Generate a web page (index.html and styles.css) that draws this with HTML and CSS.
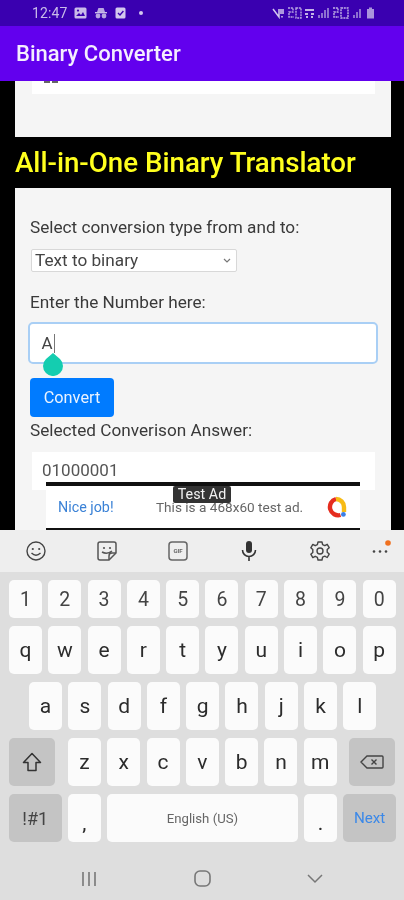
FILE: index.html
```html
<!DOCTYPE html>
<html lang="en">
<head>
<meta charset="utf-8">
<title>Binary Converter</title>
<link rel="stylesheet" href="styles.css">
</head>
<body>
<div class="phone">
  <header class="status">
    <span class="time">12:47</span>
    <svg class="st-ico" width="13" height="12" viewBox="0 0 13 12"><rect x="0.5" y="0.5" width="12" height="11" rx="1.5" fill="#c9bbe9"/><path d="M2 9l3-3 2 2 2-3 2 4z" fill="#3a00b0"/><circle cx="4" cy="3.6" r="1.1" fill="#3a00b0"/></svg>
    <svg class="st-ico" width="14" height="12" viewBox="0 0 14 12"><path d="M3 5l1.4-4h5.2L11 5z" fill="#b9a6e2"/><rect x="1" y="5" width="12" height="1.4" fill="#c9bbe9"/><circle cx="4" cy="9" r="2.4" fill="#b9a6e2"/><circle cx="10" cy="9" r="2.4" fill="#b9a6e2"/></svg>
    <svg class="st-ico" width="11" height="12" viewBox="0 0 11 12"><rect x="0.5" y="0.5" width="10" height="11" rx="1.5" fill="#d3c8ee"/><path d="M3 6l2 2 3.4-4" fill="none" stroke="#3a00b0" stroke-width="1.4"/></svg>
    <span class="dot"></span>
    <span class="st-right">
      <svg width="12" height="12" viewBox="0 0 12 12"><path d="M1 2l6 8V2M9 2v5M11 2v5M10 9v1.5" fill="none" stroke="#d3c8ee" stroke-width="1.5"/></svg>
      <svg width="15" height="12" viewBox="0 0 15 12"><path d="M1 1h5v4H2v5h5M9 1h5v10H9z" fill="none" stroke="#b9a6e2" stroke-width="1.4" stroke-dasharray="2 .8"/></svg>
      <svg width="11" height="12" viewBox="0 0 11 12"><path d="M1 2h9v2H1zM1 6h3v2H1zM7 6h3v2H7zM2 9h2v2H2zM7 9h2v2H7z" fill="#c3b3e6"/></svg>
      <svg width="12" height="12" viewBox="0 0 12 12"><path d="M1 11V8M4 11V6M7 11V3M10 11V1" stroke="#a995dc" stroke-width="1.5"/></svg>
      <svg width="18" height="12" viewBox="0 0 18 12"><path d="M1 1h5v4H2v5h5M9 1h7v10H9z" fill="none" stroke="#c3b3e6" stroke-width="1.4" stroke-dasharray="2 .8"/></svg>
      <svg width="8" height="12" viewBox="0 0 8 12"><path d="M1 11V8M4 11V5M7 11V2" stroke="#a995dc" stroke-width="1.5"/></svg>
      <svg class="batt" width="9" height="12" viewBox="0 0 9 12"><path d="M3 .5h3v1.5h2v9.500H1V2h2z" fill="#a995dc"/></svg>
    </span>
  </header>
  <div class="appbar">Binary Converter</div>

  <main class="content">
    <section class="card card-top"><div class="box box-top"><span class="stub"></span></div></section>
    <h1 class="headline">All-in-One Binary Translator</h1>
    <section class="card card-form">
      <p class="label label-first">Select conversion type from and to:</p>
      <div class="select">Text to binary
        <svg class="chev" width="8" height="5" viewBox="0 0 8 5"><path d="M1 1l3 3 3-3" fill="none" stroke="#777" stroke-width="1.2"/></svg>
      </div>
      <p class="label label-num">Enter the Number here:</p>
      <div class="input">A<span class="caret"></span></div>
      <div class="btn">Convert</div>
      <p class="label label-ans">Selected Converison Answer:</p>
      <div class="box box-ans">01000001</div>
    </section>
    <svg class="handle" width="20" height="23" viewBox="0 0 20 23"><path d="M10 0l7 5.900a10 10 0 1 1-14 0z" fill="#14cdb0"/></svg>
    <aside class="ad">
      <span class="ad-tag">Test Ad</span>
      <span class="ad-nice">Nice job!</span>
      <span class="ad-text">This is a 468x60 test ad.</span>
      <svg class="ad-logo" width="22" height="22" viewBox="0 0 22 22"><path d="M15.500 19A8 8 0 1 1 11 3" fill="none" stroke="#e52d1f" stroke-width="4.400"/><path d="M11 3a8 8 0 0 1 8 8v5" fill="none" stroke="#f7bb15" stroke-width="4.400"/><circle cx="18.400" cy="18.400" r="2.400" fill="#3a7fe6"/></svg>
    </aside>
  </main>

  <section class="keyboard">
    <div class="tools">
      <svg width="22" height="22" viewBox="0 0 22 22"><circle cx="11" cy="11" r="9" fill="none" stroke="#444" stroke-width="1.400"/><circle cx="7.800" cy="9" r="1.100" fill="#444"/><circle cx="14.200" cy="9" r="1.100" fill="#444"/><path d="M6.500 13q4.500 4.500 9 0" fill="none" stroke="#444" stroke-width="1.400"/></svg>
      <svg width="22" height="22" viewBox="0 0 22 22"><path d="M4 2h14a2 2 0 0 1 2 2v9l-7 7H4a2 2 0 0 1-2-2V4a2 2 0 0 1 2-2z" fill="none" stroke="#555" stroke-width="1.500"/><circle cx="8" cy="8" r="1.100" fill="#555"/><circle cx="14" cy="8" r="1.100" fill="#555"/><path d="M6 12q5 3 10-1M13 20v-4a3 3 0 0 1 3-3h4" fill="none" stroke="#555" stroke-width="1.500"/></svg>
      <svg width="22" height="22" viewBox="0 0 22 22"><rect x="2" y="2" width="18" height="18" rx="3" fill="none" stroke="#666" stroke-width="1.500"/><text x="11" y="13.200" text-anchor="middle" class="gif-text">GIF</text></svg>
      <svg width="22" height="22" viewBox="0 0 22 22"><rect x="8" y="1" width="6" height="12" rx="3" fill="#333"/><path d="M4.500 10a6.500 6.500 0 0 0 13 0M11 16.500V21" fill="none" stroke="#333" stroke-width="1.600"/></svg>
      <svg width="22" height="22" viewBox="0 0 22 22"><path d="M9 2h4l.6 2.600 2.200 1 2.400-1.300 2 3.400-2 1.800v2.800l2 1.800-2 3.400-2.400-1.300-2.200 1L13 20H9l-.6-2.700-2.200-1-2.400 1.300-2-3.400 2-1.800V9.600l-2-1.800 2-3.400 2.400 1.300 2.200-1z" fill="none" stroke="#444" stroke-width="1.400" stroke-linejoin="round"/><circle cx="11" cy="11" r="3" fill="none" stroke="#444" stroke-width="1.400"/></svg>
      <svg class="more" width="22" height="22" viewBox="0 0 22 22"><circle cx="5" cy="11.500" r="1.300" fill="#444"/><circle cx="11" cy="11.500" r="1.300" fill="#444"/><circle cx="17" cy="11.500" r="1.300" fill="#444"/><circle cx="19" cy="3" r="2.800" fill="#f0701e"/></svg>
    </div>
    <div class="keys">
      <div class="row row-num"><span class="key num">1</span><span class="key num">2</span><span class="key num">3</span><span class="key num">4</span><span class="key num">5</span><span class="key num">6</span><span class="key num">7</span><span class="key num">8</span><span class="key num">9</span><span class="key num">0</span></div>
      <div class="row"><span class="key">q</span><span class="key">w</span><span class="key">e</span><span class="key">r</span><span class="key">t</span><span class="key">y</span><span class="key">u</span><span class="key">i</span><span class="key">o</span><span class="key">p</span></div>
      <div class="row row-a"><span class="key">a</span><span class="key">s</span><span class="key">d</span><span class="key">f</span><span class="key">g</span><span class="key">h</span><span class="key">j</span><span class="key">k</span><span class="key">l</span></div>
      <div class="row row-z">
        <span class="key mod shift"><svg width="20" height="20" viewBox="0 0 20 20"><path d="M10 1.500L1.500 10.500H6V18.500H14V10.500H18.500Z" fill="none" stroke="#333" stroke-width="1.500" stroke-linejoin="round"/></svg></span>
        <span class="key">z</span><span class="key">x</span><span class="key">c</span><span class="key">v</span><span class="key">b</span><span class="key">n</span><span class="key">m</span>
        <span class="key mod del"><svg width="24" height="14" viewBox="0 0 24 14"><path d="M7 1h15a1 1 0 0 1 1 1v10a1 1 0 0 1-1 1H7L1 7z" fill="none" stroke="#444" stroke-width="1.400"/><path d="M11.500 4.500l5 5m0-5l-5 5" stroke="#444" stroke-width="1.400"/></svg></span>
      </div>
      <div class="row row-b">
        <span class="key mod sym">!#1</span>
        <span class="key punct">,</span>
        <span class="key space">English (US)</span>
        <span class="key punct">.</span>
        <span class="key mod next">Next</span>
      </div>
    </div>
    <nav class="navbar">
      <svg width="16" height="16" viewBox="0 0 16 16"><path d="M2 1v14M8 1v14M14 1v14" stroke="#777" stroke-width="1.600"/></svg>
      <svg width="17" height="17" viewBox="0 0 17 17"><rect x="1" y="1" width="15" height="15" rx="5" fill="none" stroke="#777" stroke-width="1.600"/></svg>
      <svg width="16" height="10" viewBox="0 0 16 10"><path d="M1 1l7 7 7-7" fill="none" stroke="#777" stroke-width="1.500"/></svg>
    </nav>
  </section>
</div>
</body>
</html>
```
FILE: styles.css
```css
* { box-sizing: border-box; }
html, body { margin: 0; padding: 0; }
body { background: #000; font-family: Roboto, "Noto Sans", sans-serif; }
.phone { width: 404px; height: 900px; display: flex; flex-direction: column; overflow: hidden; filter: blur(0.5px); }

.status { height: 26px; flex: none; background: #3a00b0; display: flex; align-items: center; padding: 0 29px 0 32px; color: #c9bbe9; }
.time { font-size: 14px; width: 42px; letter-spacing: 0.1px; }
.st-ico { margin-right: 7px; flex: none; }
.dot { width: 4px; height: 4px; border-radius: 50%; background: #d3c8ee; margin-left: 6px; }
.st-right { margin-left: auto; display: flex; align-items: center; gap: 2.500px; }
.batt { margin-left: 3px; }

.appbar { height: 55px; flex: none; background: #6200ee; color: #f4eefe; font-size: 22px; font-weight: 500; line-height: 56px; padding-left: 16px; }

.content { position: relative; flex: 1; min-height: 0; overflow: hidden; background: #000; padding: 0 13px 0 15px; }
.card { background: #f5f5f5; }
.card-top { height: 56px; padding: 0 16px 0 17px; }
.box { background: #fff; }
.box-top { height: 13px; }
.stub { display: block; width: 14px; height: 2px; margin-left: 12px; background: repeating-linear-gradient(90deg, #666 0 6px, transparent 6px 8px); }
.headline { margin: 0; height: 51px; line-height: 52px; font-size: 27.700px; font-weight: 500; color: #ffff1e; white-space: nowrap; }
.card-form { height: 342px; padding: 0 16px 0 15px; }
.label { margin: 0; font-size: 17.200px; line-height: 20px; color: #3a3a3a; white-space: nowrap; }
.label-first { padding-top: 29px; height: 61px; }
.select { width: 206px; height: 23px; margin-left: 1px; background: #fff; border: 1px solid #d8d8d8; border-radius: 2px; font-size: 17.200px; line-height: 19px; padding: 0 5px 1px 3px; color: #444; display: flex; align-items: center; justify-content: space-between; }
.label-num { margin-top: 20px; height: 30px; }
.input { width: 350px; height: 42px; margin-left: -2px; background: #fff; border: 2.500px solid #a9cff5; border-radius: 5px; font-size: 17px; padding-left: 11.500px; color: #444; display: flex; align-items: center; }
.caret { width: 1px; height: 19px; background: #777; margin-left: 1px; }
.btn { width: 84px; height: 39px; margin-top: 14px; background: #007bff; border-radius: 4px; color: #eaf3ff; font-size: 16.300px; line-height: 39px; text-align: center; }
.label-ans { margin-top: 3px; height: 32px; }
.box-ans { width: 343px; height: 38px; margin-left: 2px; font-size: 17px; line-height: 36px; padding-left: 10px; color: #555; }

.handle { position: absolute; left: 43px; top: 272px; }

.ad { position: absolute; left: 46px; top: 401px; width: 314px; height: 49px; background: #fff; border-top: 4px solid #111; border-bottom: 3px solid #111; display: flex; align-items: center; padding: 0 12px; }
.ad-tag { position: absolute; left: 127px; top: 0; width: 58px; height: 17px; background: #333; color: #f2f2f2; font-size: 14.300px; line-height: 17px; text-align: center; border-radius: 2px; }
.ad-nice { color: #3b82d6; width: 98px; font-size: 14.300px; white-space: nowrap; }
.ad-text { color: #666; width: 169px; font-size: 13.600px; white-space: nowrap; }
.ad-logo { flex: none; }

.keyboard { flex: none; height: 370px; background: #dedede; display: flex; flex-direction: column; }
.tools { height: 42px; flex: none; background: #eeeeee; display: flex; align-items: center; gap: 49px; padding-left: 25px; }
.more { margin-left: -11px; }
.gif-text { font-family: Roboto, sans-serif; font-size: 6px; font-weight: 700; fill: #666; }
.keys { display: flex; flex-direction: column; padding: 8px 9px 0; gap: 8px; }
.row { display: flex; gap: 6.300px; height: 48px; }
.row-num { height: 38px; }
.key { width: 33px; flex: none; background: #fbfbfb; border-radius: 5px; display: flex; align-items: center; justify-content: center; font-size: 21px; color: #2c2c2c; }
.num { font-size: 19.500px; color: #444; }
.row-a { padding-left: 20px; }
.mod { background: #c4c4c4; }
.shift { width: 46px; margin-right: 6.700px; }
.del { width: 46px; margin-left: 5.700px; }
.sym { width: 52.500px; font-size: 18px; color: #444; }
.punct { align-items: flex-end; padding-bottom: 7px; }
.space { width: 190.700px; font-size: 13.200px; color: #666; }
.next { width: 52.500px; font-size: 15.200px; color: #3b88e8; }

.navbar { flex: 1; display: flex; align-items: center; justify-content: space-between; padding: 15px 81px 0 81px; }
```
